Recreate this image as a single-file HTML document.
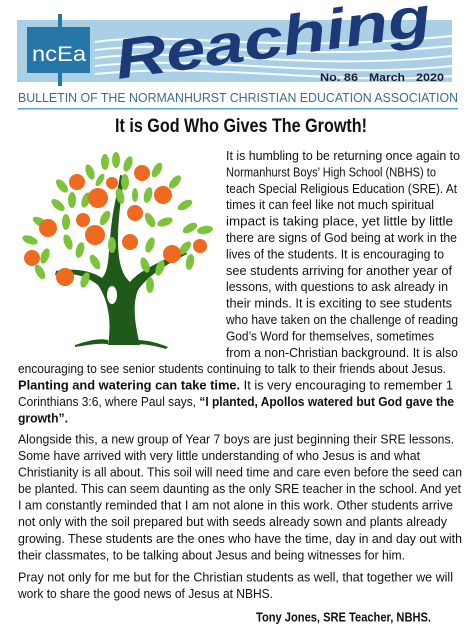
<!DOCTYPE html>
<html><head><meta charset="utf-8"><style>
html,body{margin:0;padding:0;background:#fff;}
svg{display:block}
.b{font-family:"Liberation Sans",sans-serif;font-size:13px;fill:#111;}
.bd{font-weight:bold}
</style></head><body>
<svg width="473" height="628" viewBox="0 0 473 628" xmlns="http://www.w3.org/2000/svg">
<!-- banner -->
<rect x="17" y="20" width="435" height="62" fill="#abd0e6"/>
<g fill="none" stroke="#fff" stroke-width="2" opacity="0.9">
<path d="M95 42 C180 30 260 55 452 36"/>
<path d="M95 50 C200 38 280 63 452 46"/>
<path d="M95 58 C200 46 300 72 452 56"/>
<path d="M95 66 C210 54 320 80 452 66"/>
<path d="M95 74 C220 62 330 86 452 76"/>
</g>
<rect x="27" y="30" width="63" height="43" fill="#2677a8"/>
<rect x="58" y="14" width="4" height="72" fill="#2677a8"/>
<rect x="27" y="27" width="63" height="3" fill="#2677a8"/>
<text x="32" y="61" font-family="Liberation Sans,sans-serif" font-size="21" fill="#fff" textLength="54" lengthAdjust="spacingAndGlyphs">ncEa</text>
<text transform="translate(118,79) rotate(-8)" font-family="Liberation Sans,sans-serif" font-size="56" font-weight="bold" font-style="italic" fill="#1d3a78" textLength="318" lengthAdjust="spacingAndGlyphs">Reaching</text>
<text x="320" y="81" font-family="Liberation Sans,sans-serif" font-size="11" font-weight="bold" fill="#1a1a3a" textLength="38" lengthAdjust="spacingAndGlyphs">No. 86</text>
<text x="369" y="81" font-family="Liberation Sans,sans-serif" font-size="11" font-weight="bold" fill="#1a1a3a" textLength="36" lengthAdjust="spacingAndGlyphs">March</text>
<text x="416" y="81" font-family="Liberation Sans,sans-serif" font-size="11" font-weight="bold" fill="#1a1a3a" textLength="28" lengthAdjust="spacingAndGlyphs">2020</text>
<text x="18" y="102" font-family="Liberation Sans,sans-serif" font-size="12.5" fill="#3a6f8c" textLength="440" lengthAdjust="spacingAndGlyphs">BULLETIN OF THE NORMANHURST CHRISTIAN EDUCATION ASSOCIATION</text>
<rect x="18" y="108" width="440" height="1.5" fill="#5aa7c4"/>
<text x="115" y="132" font-family="Liberation Sans,sans-serif" font-size="19" font-weight="bold" fill="#111" textLength="252" lengthAdjust="spacingAndGlyphs">It is God Who Gives The Growth!</text>

<!-- tree -->
<g>
<g fill="#1f5a1a">
<path d="M108 345 C112 320 108 300 98 285 C85 275 70 272 55 275 L56 271 C72 268 90 270 102 278 C110 270 108 250 112 220 C114 205 118 190 120 175 L124 176 C122 195 118 215 118 240 C118 262 122 275 130 282 C140 270 160 262 185 250 L187 254 C165 265 148 276 138 290 C132 305 135 325 140 345 Z"/>
<path d="M75 345 C90 340 100 338 108 340 L108 344 C98 343 88 345 75 347 Z"/>
<path d="M135 340 C148 340 158 343 168 347 L166 349 C156 346 146 344 135 344 Z"/>
</g>
<ellipse cx="112" cy="295" rx="5" ry="9" fill="#fff"/>
<g fill="#7cc23a">
<ellipse cx="105" cy="162" rx="4" ry="8"/><ellipse cx="116" cy="160" rx="4" ry="8"/>
<ellipse cx="128" cy="164" rx="4" ry="8" transform="rotate(20 128 164)"/>
<ellipse cx="157" cy="170" rx="4" ry="8" transform="rotate(30 157 170)"/>
<ellipse cx="90" cy="172" rx="4" ry="8" transform="rotate(-20 90 172)"/>
<ellipse cx="62" cy="186" rx="4" ry="8" transform="rotate(-40 62 186)"/>
<ellipse cx="175" cy="182" rx="4" ry="8" transform="rotate(40 175 182)"/>
<ellipse cx="58" cy="205" rx="4" ry="8" transform="rotate(-50 58 205)"/>
<ellipse cx="72" cy="200" rx="4" ry="8"/><ellipse cx="86" cy="200" rx="4" ry="8" transform="rotate(20 86 200)"/>
<ellipse cx="120" cy="196" rx="4" ry="8" transform="rotate(-15 120 196)"/>
<ellipse cx="148" cy="195" rx="4" ry="8" transform="rotate(15 148 195)"/>
<ellipse cx="185" cy="205" rx="4" ry="8" transform="rotate(60 185 205)"/>
<ellipse cx="40" cy="222" rx="4" ry="8" transform="rotate(-60 40 222)"/>
<ellipse cx="66" cy="222" rx="4" ry="8"/><ellipse cx="105" cy="218" rx="4" ry="8" transform="rotate(30 105 218)"/>
<ellipse cx="150" cy="220" rx="4" ry="8" transform="rotate(-30 150 220)"/>
<ellipse cx="165" cy="222" rx="4" ry="8" transform="rotate(70 165 222)"/>
<ellipse cx="190" cy="228" rx="4" ry="8" transform="rotate(60 190 228)"/>
<ellipse cx="30" cy="240" rx="4" ry="8" transform="rotate(-70 30 240)"/>
<ellipse cx="68" cy="242" rx="4" ry="8" transform="rotate(-20 68 242)"/>
<ellipse cx="80" cy="250" rx="4" ry="8" transform="rotate(15 80 250)"/>
<ellipse cx="112" cy="245" rx="4" ry="8"/>
<ellipse cx="150" cy="245" rx="4" ry="8" transform="rotate(20 150 245)"/>
<ellipse cx="205" cy="230" rx="4" ry="8" transform="rotate(80 205 230)"/>
<ellipse cx="185" cy="248" rx="4" ry="8" transform="rotate(40 185 248)"/>
<ellipse cx="45" cy="256" rx="4" ry="8" transform="rotate(20 45 256)"/>
<ellipse cx="95" cy="262" rx="4" ry="8" transform="rotate(-30 95 262)"/>
<ellipse cx="145" cy="265" rx="4" ry="8" transform="rotate(-20 145 265)"/>
<ellipse cx="160" cy="268" rx="4" ry="8" transform="rotate(20 160 268)"/>
<ellipse cx="190" cy="262" rx="4" ry="8" transform="rotate(10 190 262)"/>
<ellipse cx="40" cy="272" rx="4" ry="8" transform="rotate(-30 40 272)"/>
<ellipse cx="85" cy="280" rx="4" ry="8" transform="rotate(20 85 280)"/>
<ellipse cx="150" cy="285" rx="4" ry="8"/>
<ellipse cx="125" cy="182" rx="4" ry="8"/><ellipse cx="135" cy="195" rx="3" ry="7"/>
<ellipse cx="100" cy="180" rx="3" ry="7" transform="rotate(30 100 180)"/>
</g>
<g fill="#ee6a1e">
<circle cx="77" cy="182" r="8"/><circle cx="112" cy="183" r="6"/><circle cx="142" cy="173" r="8"/>
<circle cx="98" cy="198" r="10"/><circle cx="163" cy="195" r="9"/><circle cx="135" cy="213" r="8"/>
<circle cx="83" cy="220" r="7"/><circle cx="48" cy="228" r="9"/><circle cx="95" cy="235" r="10"/>
<circle cx="130" cy="242" r="8"/><circle cx="200" cy="246" r="7"/><circle cx="172" cy="254" r="9"/>
<circle cx="32" cy="258" r="8"/><circle cx="65" cy="277" r="9"/>
</g>
</g>

<!-- right column -->
<g class="b">
<text x="226" y="160" textLength="234" lengthAdjust="spacingAndGlyphs">It is humbling to be returning once again to</text>
<text x="226" y="176.4" textLength="210" lengthAdjust="spacingAndGlyphs">Normanhurst Boys’ High School (NBHS) to</text>
<text x="226" y="192.8" textLength="231" lengthAdjust="spacingAndGlyphs">teach Special Religious Education (SRE). At</text>
<text x="226" y="209.2" textLength="208" lengthAdjust="spacingAndGlyphs">times it can feel like not much spiritual</text>
<text x="226" y="225.6" textLength="227" lengthAdjust="spacingAndGlyphs">impact is taking place, yet little by little</text>
<text x="226" y="242" textLength="231" lengthAdjust="spacingAndGlyphs">there are signs of God being at work in the</text>
<text x="226" y="258.4" textLength="218" lengthAdjust="spacingAndGlyphs">lives of the students. It is encouraging to</text>
<text x="226" y="274.8" textLength="226" lengthAdjust="spacingAndGlyphs">see students arriving for another year of</text>
<text x="226" y="291.2" textLength="222" lengthAdjust="spacingAndGlyphs">lessons, with questions to ask already in</text>
<text x="226" y="307.6" textLength="226" lengthAdjust="spacingAndGlyphs">their minds. It is exciting to see students</text>
<text x="226" y="324" textLength="232" lengthAdjust="spacingAndGlyphs">who have taken on the challenge of reading</text>
<text x="226" y="340.4" textLength="208" lengthAdjust="spacingAndGlyphs">God’s Word for themselves, sometimes</text>
<text x="226" y="356.8" textLength="232" lengthAdjust="spacingAndGlyphs">from a non-Christian background. It is also</text>
<text x="18" y="373.2" textLength="428" lengthAdjust="spacingAndGlyphs">encouraging to see senior students continuing to talk to their friends about Jesus.</text>
<text x="18" y="389.6" textLength="435" lengthAdjust="spacingAndGlyphs"><tspan class="bd">Planting and watering can take time.</tspan> It is very encouraging to remember 1</text>
<text x="18" y="406" textLength="436" lengthAdjust="spacingAndGlyphs">Corinthians 3:6, where Paul says, <tspan class="bd">“I planted, Apollos watered but God gave the</tspan></text>
<text x="18" y="422.4" class="bd" textLength="50" lengthAdjust="spacingAndGlyphs">growth”.</text>
<text x="18" y="443.5" textLength="436" lengthAdjust="spacingAndGlyphs">Alongside this, a new group of Year 7 boys are just beginning their SRE lessons.</text>
<text x="18" y="460" textLength="402" lengthAdjust="spacingAndGlyphs">Some have arrived with very little understanding of who Jesus is and what</text>
<text x="18" y="476.6" textLength="444" lengthAdjust="spacingAndGlyphs">Christianity is all about. This soil will need time and care even before the seed can</text>
<text x="18" y="493.1" textLength="443" lengthAdjust="spacingAndGlyphs">be planted. This can seem daunting as the only SRE teacher in the school. And yet</text>
<text x="18" y="509.7" textLength="435" lengthAdjust="spacingAndGlyphs">I am constantly reminded that I am not alone in this work. Other students arrive</text>
<text x="18" y="526.2" textLength="429" lengthAdjust="spacingAndGlyphs">not only with the soil prepared but with seeds already sown and plants already</text>
<text x="18" y="542.8" textLength="444" lengthAdjust="spacingAndGlyphs">growing. These students are the ones who have the time, day in and day out with</text>
<text x="18" y="559.3" textLength="387" lengthAdjust="spacingAndGlyphs">their classmates, to be talking about Jesus and being witnesses for him.</text>
<text x="18" y="581.5" textLength="435" lengthAdjust="spacingAndGlyphs">Pray not only for me but for the Christian students as well, that together we will</text>
<text x="18" y="598" textLength="255" lengthAdjust="spacingAndGlyphs">work to share the good news of Jesus at NBHS.</text>
<text x="256" y="621.5" class="bd" textLength="175" lengthAdjust="spacingAndGlyphs">Tony Jones, SRE Teacher, NBHS.</text>
</g>
</svg>
</body></html>
